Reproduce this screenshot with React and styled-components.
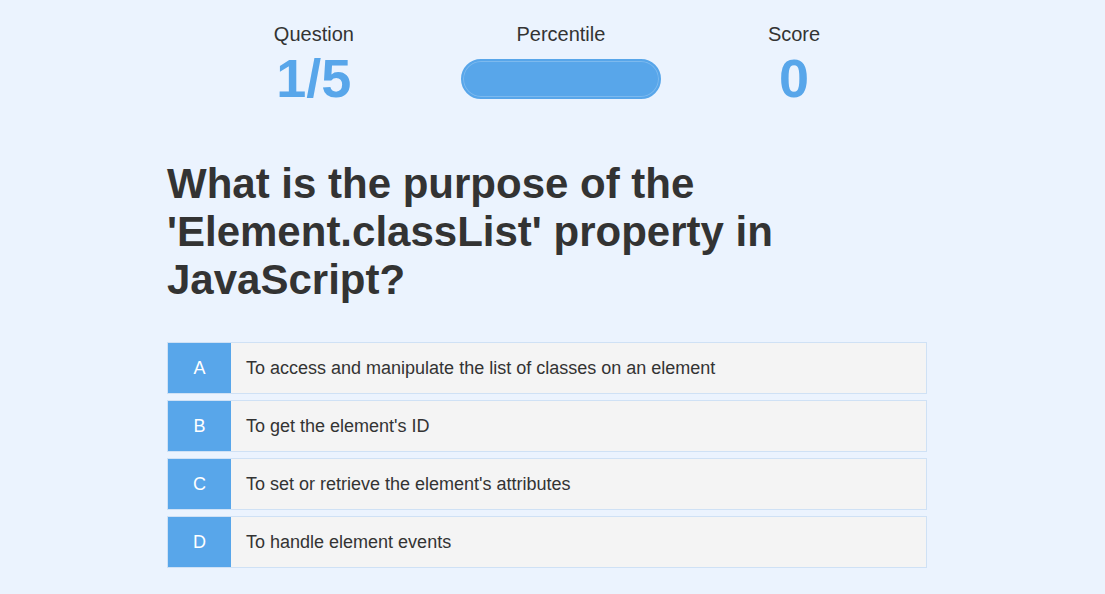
import styled, { createGlobalStyle } from 'styled-components';

const GlobalStyle = createGlobalStyle`
  html, body {
    margin: 0;
    padding: 0;
    background: #ebf3fe;
  }
  body {
    font-family: "Liberation Sans", Arial, sans-serif;
    color: #333;
  }
`;

const Page = styled.div`
  min-height: 594px;
  padding: 22px 11px 0 0;
  box-sizing: border-box;
`;

const Stats = styled.div`
  display: flex;
  justify-content: center;
  align-items: flex-start;
  gap: 107px;
`;

const Stat = styled.div`
  display: flex;
  flex-direction: column;
  align-items: center;
`;

const StatLabel = styled.div`
  font-size: 20px;
  line-height: 24px;
  color: #333;
`;

const StatValue = styled.div`
  font-size: 54px;
  font-weight: bold;
  line-height: 64px;
  color: #58a6ea;
`;

const Bar = styled.div`
  width: 200px;
  height: 40px;
  margin-top: 13px;
  box-sizing: border-box;
  border-radius: 20px;
  background: #58a6ea;
  border: 2px solid #58a6ea;
  box-shadow: inset 0 0 0 1px #7cb9ee;
`;

const Quiz = styled.div`
  width: 760px;
  margin: 0 auto;
`;

const Question = styled.h1`
  margin: 50px 0 38px;
  font-size: 42px;
  line-height: 48px;
  font-weight: bold;
  color: #333;
  width: 640px;
`;

const Options = styled.div`
  display: flex;
  flex-direction: column;
  gap: 6px;
`;

const Option = styled.div`
  display: flex;
  height: 52px;
  box-sizing: border-box;
  border: 1px solid #cfe1f5;
  background: #f4f4f4;
`;

const Letter = styled.div`
  width: 63px;
  display: flex;
  align-items: center;
  justify-content: center;
  background: #58a6ea;
  color: #fff;
  font-size: 18px;
`;

const OptionText = styled.div`
  display: flex;
  align-items: center;
  padding-left: 15px;
  font-size: 18px;
  color: #333;
`;

const options = [
  ['A', 'To access and manipulate the list of classes on an element'],
  ['B', "To get the element's ID"],
  ['C', "To set or retrieve the element's attributes"],
  ['D', 'To handle element events'],
];

export default function App() {
  return (
    <Page>
      <GlobalStyle />
      <Stats>
        <Stat>
          <StatLabel>Question</StatLabel>
          <StatValue>1/5</StatValue>
        </Stat>
        <Stat>
          <StatLabel>Percentile</StatLabel>
          <Bar />
        </Stat>
        <Stat>
          <StatLabel>Score</StatLabel>
          <StatValue>0</StatValue>
        </Stat>
      </Stats>
      <Quiz>
        <Question>What is the purpose of the 'Element.classList' property in JavaScript?</Question>
        <Options>
          {options.map(([letter, text]) => (
            <Option key={letter}>
              <Letter>{letter}</Letter>
              <OptionText>{text}</OptionText>
            </Option>
          ))}
        </Options>
      </Quiz>
    </Page>
  );
}
